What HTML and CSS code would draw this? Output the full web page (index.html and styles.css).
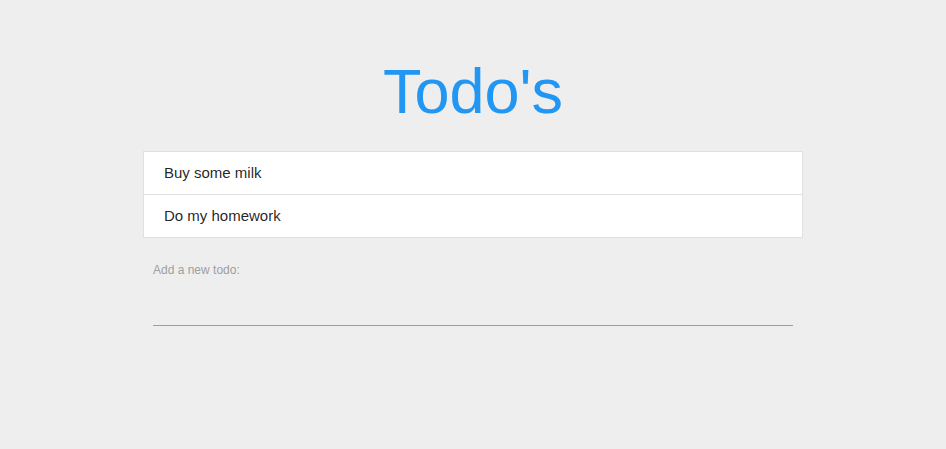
FILE: index.html
```html
<!DOCTYPE html>
<html>
<head>
<meta charset="utf-8">
<link rel="stylesheet" href="styles.css">
</head>
<body>
<div class="container">
  <h1 class="title">Todo's</h1>
  <ul class="collection">
    <li class="item">Buy some milk</li>
    <li class="item">Do my homework</li>
  </ul>
  <form class="add-form">
    <label class="label" for="todo">Add a new todo:</label>
    <input class="input" id="todo" type="text">
  </form>
</div>
</body>
</html>
```
FILE: styles.css
```css
html, body {
  margin: 0;
  padding: 0;
}
body {
  background: #eeeeee;
  font-family: "Liberation Sans", Arial, sans-serif;
  color: rgba(0, 0, 0, 0.87);
}
.container {
  width: 660px;
  margin: 0 auto;
}
.title {
  margin: 0 0 25px;
  padding-top: 56px;
  text-align: center;
  color: #2196f3;
  font-weight: 400;
  font-size: 63px;
  line-height: 70px;
}
.collection {
  list-style: none;
  margin: 0;
  padding: 0;
  background: #fff;
  border: 1px solid #e0e0e0;
}
.item {
  padding: 10px 20px;
  line-height: 22px;
  font-size: 15px;
  border-bottom: 1px solid #e0e0e0;
}
.item:last-child {
  border-bottom: none;
}
.add-form {
  padding: 0 10px;
  display: flex;
  flex-direction: column;
}
.label {
  margin-top: 25px;
  font-size: 12px;
  line-height: 14px;
  color: #9e9e9e;
}
.input {
  margin: 0;
  padding: 0;
  height: 48px;
  border: none;
  border-bottom: 1px solid #9e9e9e;
  background: transparent;
  outline: none;
  font: inherit;
}
```
